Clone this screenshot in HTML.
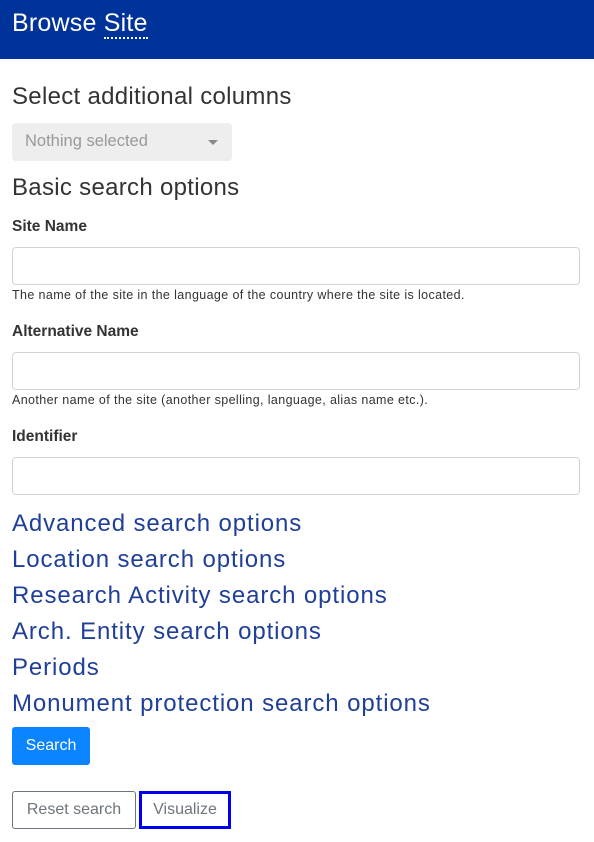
<!DOCTYPE html>
<html><head><style>
*{box-sizing:border-box;margin:0;padding:0}
body{width:594px;height:842px;font-family:"Liberation Sans",sans-serif;color:#333;background:#fff;position:relative;overflow:hidden}
.hdr{position:absolute;left:0;top:0;width:594px;height:59px;background:#003399;color:#fff;font-size:25px;padding:9px 12px;letter-spacing:0.2px}
.hdr u{text-decoration:none;border-bottom:2px dotted #fff}
.a{position:absolute;left:12px;white-space:nowrap}
h2{font-weight:normal;font-size:24px;color:#333;letter-spacing:0.3px}
.lbl{font-weight:bold;font-size:15.5px;color:#333}
.inp{position:absolute;left:12px;width:568px;height:38px;border:1px solid #ced4da;border-radius:4px}
.hint{font-size:12.5px;color:#333;letter-spacing:0.38px}
.lk{font-size:24px;color:#1f3f99;letter-spacing:0.9px}
.btn{position:absolute;border-radius:3px;font-size:16px;text-align:center}
</style></head><body>
<div class="hdr">Browse <u>Site</u></div>
<h2 class="a" style="top:83px">Select additional columns</h2>
<div class="a" style="top:123px;width:220px;height:38px;background:#eeeeee;border-radius:4px;color:#999;font-size:16.5px;padding:9px 13px">Nothing selected<span style="position:absolute;right:14px;top:17px;border:5px solid transparent;border-top-color:#888;border-bottom:0"></span></div>
<h2 class="a" style="top:174px">Basic search options</h2>
<div class="a lbl" style="top:218px">Site Name</div>
<div class="inp" style="top:247px"></div>
<div class="a hint" style="top:288px">The name of the site in the language of the country where the site is located.</div>
<div class="a lbl" style="top:323px">Alternative Name</div>
<div class="inp" style="top:352px"></div>
<div class="a hint" style="top:393px">Another name of the site (another spelling, language, alias name etc.).</div>
<div class="a lbl" style="top:428px">Identifier</div>
<div class="inp" style="top:457px"></div>
<div class="a lk" style="top:510px">Advanced search options</div>
<div class="a lk" style="top:546px">Location search options</div>
<div class="a lk" style="top:582px">Research Activity search options</div>
<div class="a lk" style="top:618px">Arch. Entity search options</div>
<div class="a lk" style="top:654px">Periods</div>
<div class="a lk" style="top:690px">Monument protection search options</div>
<div class="btn" style="left:12px;top:727px;width:78px;height:38px;background:#0a84ff;color:#fff;padding-top:10px">Search</div>
<div class="btn" style="left:12px;top:791px;width:124px;height:38px;border:1px solid #6c757d;color:#6c757d;padding-top:9px">Reset search</div>
<div class="btn" style="left:139px;top:791px;width:92px;height:38px;border:3px solid #0000ee;border-radius:0;color:#6c757d;padding-top:7px">Visualize</div>
</body></html>
